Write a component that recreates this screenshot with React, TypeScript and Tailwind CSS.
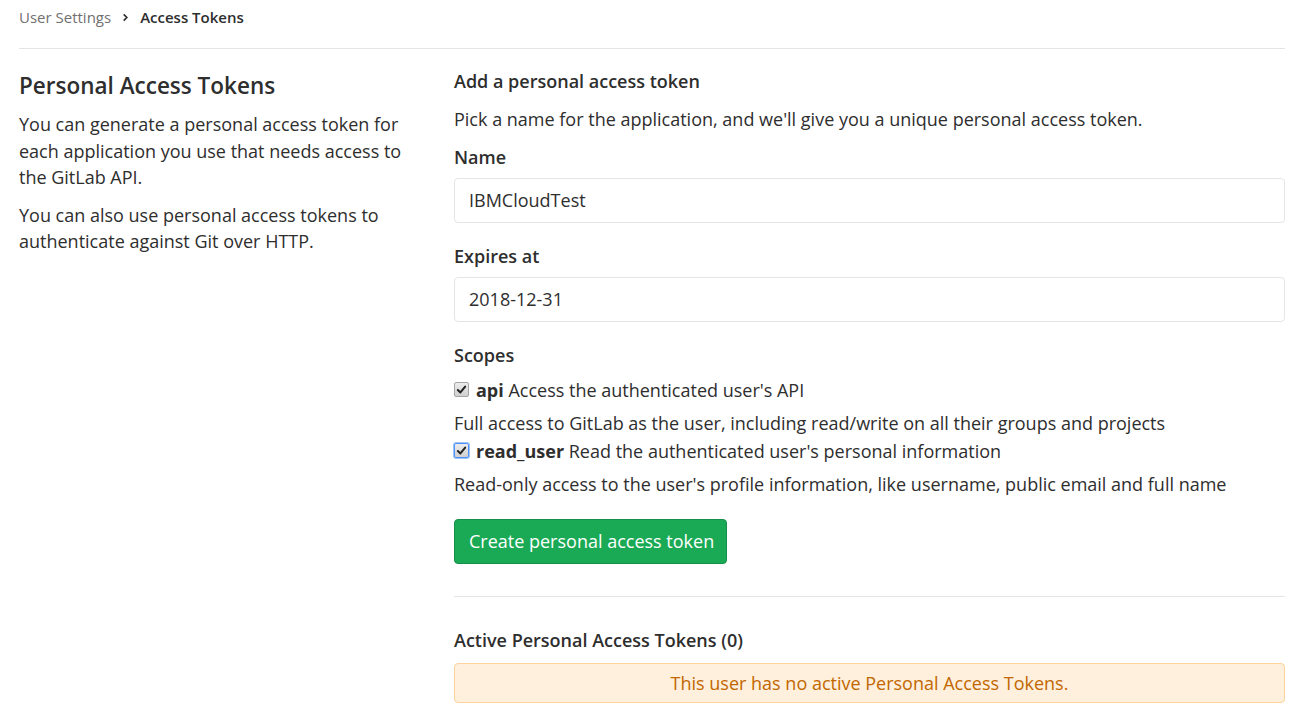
import React from 'react';

const FONT = { fontFamily: '"Open Sans", "Noto Sans", sans-serif' };

function Checkbox({ focused }: { focused?: boolean }) {
  return (
    <span
      className={
        'inline-flex items-center justify-center w-[15px] h-[15px] rounded-[2px] border ' +
        (focused ? 'border-[#4d90fe] ring-1 ring-[#9ec3f5]' : 'border-[#a5a5a5]') +
        ' bg-gradient-to-b from-[#ececec] to-[#d0d0d0]'
      }
    >
      <svg viewBox="0 0 12 12" className="w-[11px] h-[11px]">
        <path d="M2 6.5 L4.8 9.2 L10 2.8" fill="none" stroke="#222" strokeWidth="2.2" strokeLinecap="round" strokeLinejoin="round" />
      </svg>
    </span>
  );
}

export default function App() {
  return (
    <div className="bg-white min-h-[711px] pl-[19px] pr-[12px] text-[#2e2e2e] text-[18px] leading-[26.5px]" style={FONT}>
      <div className="h-[49px] flex items-center gap-[10px] pb-[14px] text-[15px] border-b border-[#e5e5e5]">
        <span className="text-[#707070]">User Settings</span>
        <svg viewBox="0 0 10 10" className="w-[9px] h-[9px]">
          <path d="M3 1.5 L6.5 5 L3 8.5" fill="none" stroke="#2e2e2e" strokeWidth="1.8" />
        </svg>
        <span className="text-[#2e2e2e] font-semibold">Access Tokens</span>
      </div>

      <div className="grid grid-cols-[397px_1fr] gap-[38px] pt-[19px]">
        <div>
          <h4 className="text-[22.5px] font-semibold leading-[30px] mt-[3px] mb-[10px]">Personal Access Tokens</h4>
          <p className="mb-[11px]">
            You can generate a personal access token for each application you use that needs access to the GitLab API.
          </p>
          <p>You can also use personal access tokens to authenticate against Git over HTTP.</p>
        </div>

        <div>
          <h5 className="font-semibold mb-[11px]">Add a personal access token</h5>
          <p className="mb-[12px]">Pick a name for the application, and we'll give you a unique personal access token.</p>

          <label className="block font-semibold mb-[7px]">Name</label>
          <div className="h-[45px] border border-[#e5e5e5] rounded-[4px] px-[14px] flex items-center mb-[20px]">
            IBMCloudTest
          </div>

          <label className="block font-semibold mb-[8px]">Expires at</label>
          <div className="h-[45px] border border-[#e5e5e5] rounded-[4px] px-[14px] flex items-center mb-[20px]">
            2018-12-31
          </div>

          <label className="block font-semibold mb-[8px]">Scopes</label>
          <div className="flex items-center gap-[7px]">
            <Checkbox />
            <span>
              <b className="font-bold">api</b> Access the authenticated user's API
            </span>
          </div>
          <p className="mt-[7px]">Full access to GitLab as the user, including read/write on all their groups and projects</p>
          <div className="flex items-center gap-[7px] mt-[1px]">
            <Checkbox focused />
            <span>
              <b className="font-bold">read_user</b> Read the authenticated user's personal information
            </span>
          </div>
          <p className="mt-[7px]">Read-only access to the user's profile information, like username, public email and full name</p>

          <button className="mt-[21px] h-[45px] pl-[14px] pr-[12px] rounded-[4px] bg-[#1aaa55] border border-[#168f48] text-white">
            Create personal access token
          </button>

          <div className="border-t border-[#e5e5e5] mt-[32px] mb-[30px]" />

          <h5 className="font-semibold mb-[10px]">Active Personal Access Tokens (0)</h5>
          <div className="h-[40px] border border-[#fdd29c] bg-[#fef0dc] rounded-[4px] flex items-center justify-center text-[#c26700]">
            This user has no active Personal Access Tokens.
          </div>
        </div>
      </div>
    </div>
  );
}
